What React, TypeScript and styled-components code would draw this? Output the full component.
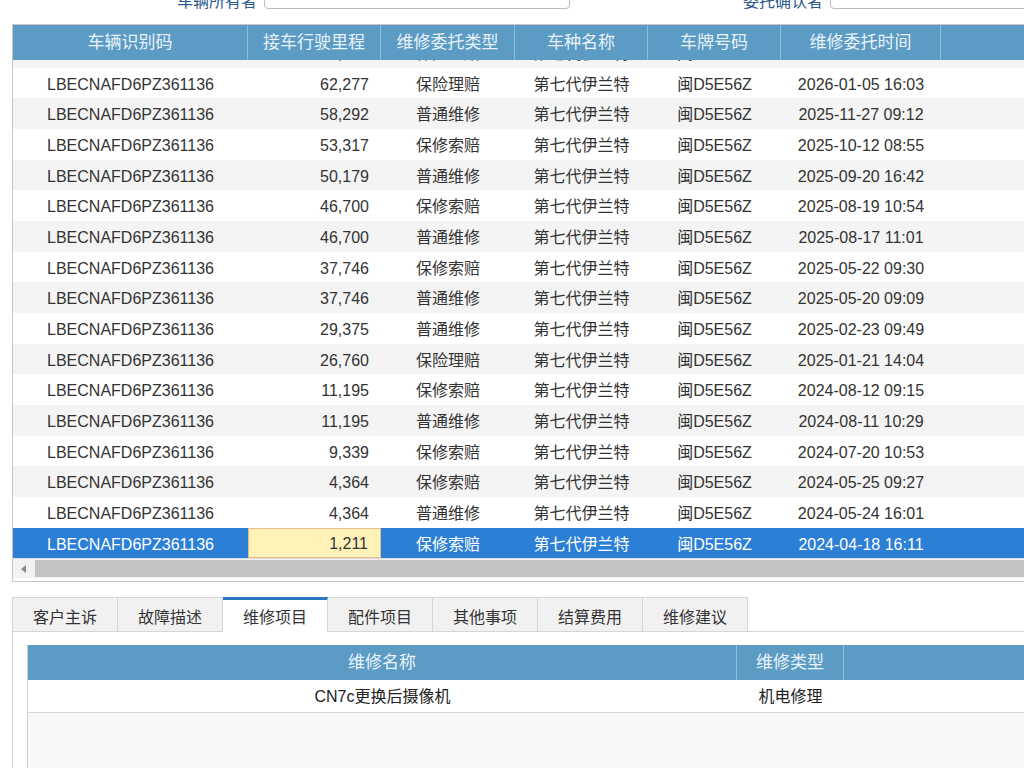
import React, { useLayoutEffect, useRef } from 'react'
import styled, { createGlobalStyle, css } from 'styled-components'

const GlobalStyle = createGlobalStyle`
html, body {
  margin: 0;
  padding: 0;
  background: #fff;
}
body {
  font-family: "Liberation Sans", "Noto Sans CJK SC", sans-serif;
  color: #333;
}
`

const Page = styled.div`
width: 1024px;
height: 768px;
overflow: hidden;
padding-left: 12px;
box-sizing: border-box;
`

const FormRow = styled.div`
display: flex;
align-items: flex-end;
height: 10px;
overflow: hidden;
`

const FormLabel = styled.label<{ $w: number }>`
width: ${p => p.$w}px;
flex-shrink: 0;
text-align: right;
font-size: 16px;
line-height: 20px;
color: #2d5a8c;
padding-right: 7px;
box-sizing: border-box;
margin-bottom: -2px;
`

const FormInput = styled.div<{ $w: number }>`
width: ${p => p.$w}px;
height: 30px;
border: 1px solid #bdbdbd;
border-radius: 4px;
box-sizing: border-box;
margin-bottom: 1px;
flex-shrink: 0;
`

const Grid = styled.div`
margin-top: 14px;
width: 1100px;
border: 1px solid #c6c6c6;
background: #fff;
padding-bottom: 3px;
`

const HeaderRow = styled.div`
display: flex;
height: 35px;
background: #5b9bc4;
`

const HeaderCell = styled.div<{ $w: number }>`
width: ${p => p.$w}px;
flex-shrink: 0;
box-sizing: border-box;
border-right: 1px solid #8dbedc;
color: #e9f3fb;
font-size: 17px;
line-height: 35px;
text-align: center;
`

const Body = styled.div`
height: 498px;
overflow: hidden;
`

const Row = styled.div<{ $stripe: boolean; $selected: boolean }>`
display: flex;
height: 30.67px;
background: ${p => (p.$stripe ? '#f4f4f4' : '#fff')};
${p =>
    p.$selected &&
    css`
      background: #2c7fd6;
      color: #fff;
    `}
`

const Cell = styled.div<{ $w: number; $align?: 'left' | 'right' | 'center'; $active?: boolean }>`
width: ${p => p.$w}px;
flex-shrink: 0;
box-sizing: border-box;
font-size: 16px;
line-height: 30px;
padding: 2px 12px 0;
white-space: nowrap;
overflow: hidden;
text-align: ${p => p.$align || 'center'};
${p =>
    p.$active &&
    css`
      background: #fff2b8;
      border: 1px solid #ecb987;
      color: #333;
      padding-top: 1px;
      line-height: 28px;
    `}
`

const HScroll = styled.div`
display: flex;
align-items: center;
height: 19px;
border-top: 1px solid #dcdcdc;
background: #f2f2f2;
`

const ScrollArrow = styled.div`
width: 22px;
display: flex;
justify-content: center;
align-items: center;
height: 100%;
`

const ScrollThumb = styled.div`
flex: 1;
height: 17px;
background: #c3c3c3;
`

const Tabs = styled.div`
display: flex;
margin-top: 15px;
height: 35px;
`

const Tab = styled.div<{ $active?: boolean }>`
width: 105px;
box-sizing: border-box;
border: 1px solid #d6d6d6;
border-left: none;
background: #f1f1f1;
font-size: 16px;
line-height: 28px;
padding-top: 6px;
text-align: center;
color: #333;
&:first-child {
  border-left: 1px solid #d6d6d6;
  width: 106px;
}
${p =>
    p.$active &&
    css`
      background: #fff;
      border-top: 3px solid #2b78c2;
      border-bottom: 1px solid #fff;
      padding-top: 4px;
    `}
`

const TabFill = styled.div`
flex: 1;
border-bottom: 1px solid #d6d6d6;
`

const Panel = styled.div`
border-left: 1px solid #cfcfcf;
padding: 13px 0 0 14px;
height: 200px;
`

const SubTable = styled.div`
border-left: 1px solid #cfcfcf;
height: 100%;
background: #f7f7f7;
`

const SubHeader = styled.div`
display: flex;
height: 35px;
background: #5b9bc4;
`

const SubRow = styled.div`
display: flex;
height: 32px;
background: #fff;
border-bottom: 1px solid #d8d8d8;
`

const SubCell = styled.div<{ $w: number }>`
width: ${p => p.$w}px;
flex-shrink: 0;
box-sizing: border-box;
font-size: 16px;
line-height: 30px;
padding-top: 2px;
text-align: center;
color: #222;
`

const columns = [
  { title: '车辆识别码', w: 235 },
  { title: '接车行驶里程', w: 133 },
  { title: '维修委托类型', w: 134 },
  { title: '车种名称', w: 133 },
  { title: '车牌号码', w: 133 },
  { title: '维修委托时间', w: 160 },
  { title: '', w: 160 },
]

const records = [
  ['63,518', '保险理赔', '2026-01-13 09:41'],
  ['62,277', '保险理赔', '2026-01-05 16:03'],
  ['58,292', '普通维修', '2025-11-27 09:12'],
  ['53,317', '保修索赔', '2025-10-12 08:55'],
  ['50,179', '普通维修', '2025-09-20 16:42'],
  ['46,700', '保修索赔', '2025-08-19 10:54'],
  ['46,700', '普通维修', '2025-08-17 11:01'],
  ['37,746', '保修索赔', '2025-05-22 09:30'],
  ['37,746', '普通维修', '2025-05-20 09:09'],
  ['29,375', '普通维修', '2025-02-23 09:49'],
  ['26,760', '保险理赔', '2025-01-21 14:04'],
  ['11,195', '保修索赔', '2024-08-12 09:15'],
  ['11,195', '普通维修', '2024-08-11 10:29'],
  ['9,339', '保修索赔', '2024-07-20 10:53'],
  ['4,364', '保修索赔', '2024-05-25 09:27'],
  ['4,364', '普通维修', '2024-05-24 16:01'],
  ['1,211', '保修索赔', '2024-04-18 16:11'],
]

const tabs = ['客户主诉', '故障描述', '维修项目', '配件项目', '其他事项', '结算费用', '维修建议']

const App = () => {
  const bodyRef = useRef<HTMLDivElement>(null)
  const selected = records.length - 1

  useLayoutEffect(() => {
    // list is scrolled a little so the first row is cut under the header
    if (bodyRef.current) bodyRef.current.scrollTop = 23
  }, [])

  return (
    <>
      <GlobalStyle />
      <Page>
        <FormRow>
          <FormLabel $w={252}>车辆所有者</FormLabel>
          <FormInput $w={306} />
          <FormLabel $w={260}>委托确认者</FormLabel>
          <FormInput $w={220} />
        </FormRow>

        <Grid>
          <HeaderRow>
            {columns.map((c, i) => (
              <HeaderCell key={i} $w={c.w}>{c.title}</HeaderCell>
            ))}
          </HeaderRow>
          <Body ref={bodyRef}>
            {records.map((r, i) => (
              <Row key={i} $stripe={i % 2 === 0} $selected={i === selected}>
                <Cell $w={235}>LBECNAFD6PZ361136</Cell>
                <Cell $w={133} $align='right' $active={i === selected}>{r[0]}</Cell>
                <Cell $w={134}>{r[1]}</Cell>
                <Cell $w={133}>第七代伊兰特</Cell>
                <Cell $w={133}>闽D5E56Z</Cell>
                <Cell $w={160}>{r[2]}</Cell>
                <Cell $w={160} />
              </Row>
            ))}
          </Body>
          <HScroll>
            <ScrollArrow>
              <svg width='6' height='8' viewBox='0 0 6 8'>
                <path d='M5 0 L0 4 L5 8 Z' fill='#8a8a8a' />
              </svg>
            </ScrollArrow>
            <ScrollThumb />
          </HScroll>
        </Grid>

        <Tabs>
          {tabs.map((t, i) => (
            <Tab key={t} $active={i === 2}>{t}</Tab>
          ))}
          <TabFill />
        </Tabs>
        <Panel>
          <SubTable>
            <SubHeader>
              <HeaderCell $w={709}>维修名称</HeaderCell>
              <HeaderCell $w={107}>维修类型</HeaderCell>
              <HeaderCell $w={200}></HeaderCell>
            </SubHeader>
            <SubRow>
              <SubCell $w={709}>CN7c更换后摄像机</SubCell>
              <SubCell $w={107}>机电修理</SubCell>
            </SubRow>
          </SubTable>
        </Panel>
      </Page>
    </>
  )
}

export default App
